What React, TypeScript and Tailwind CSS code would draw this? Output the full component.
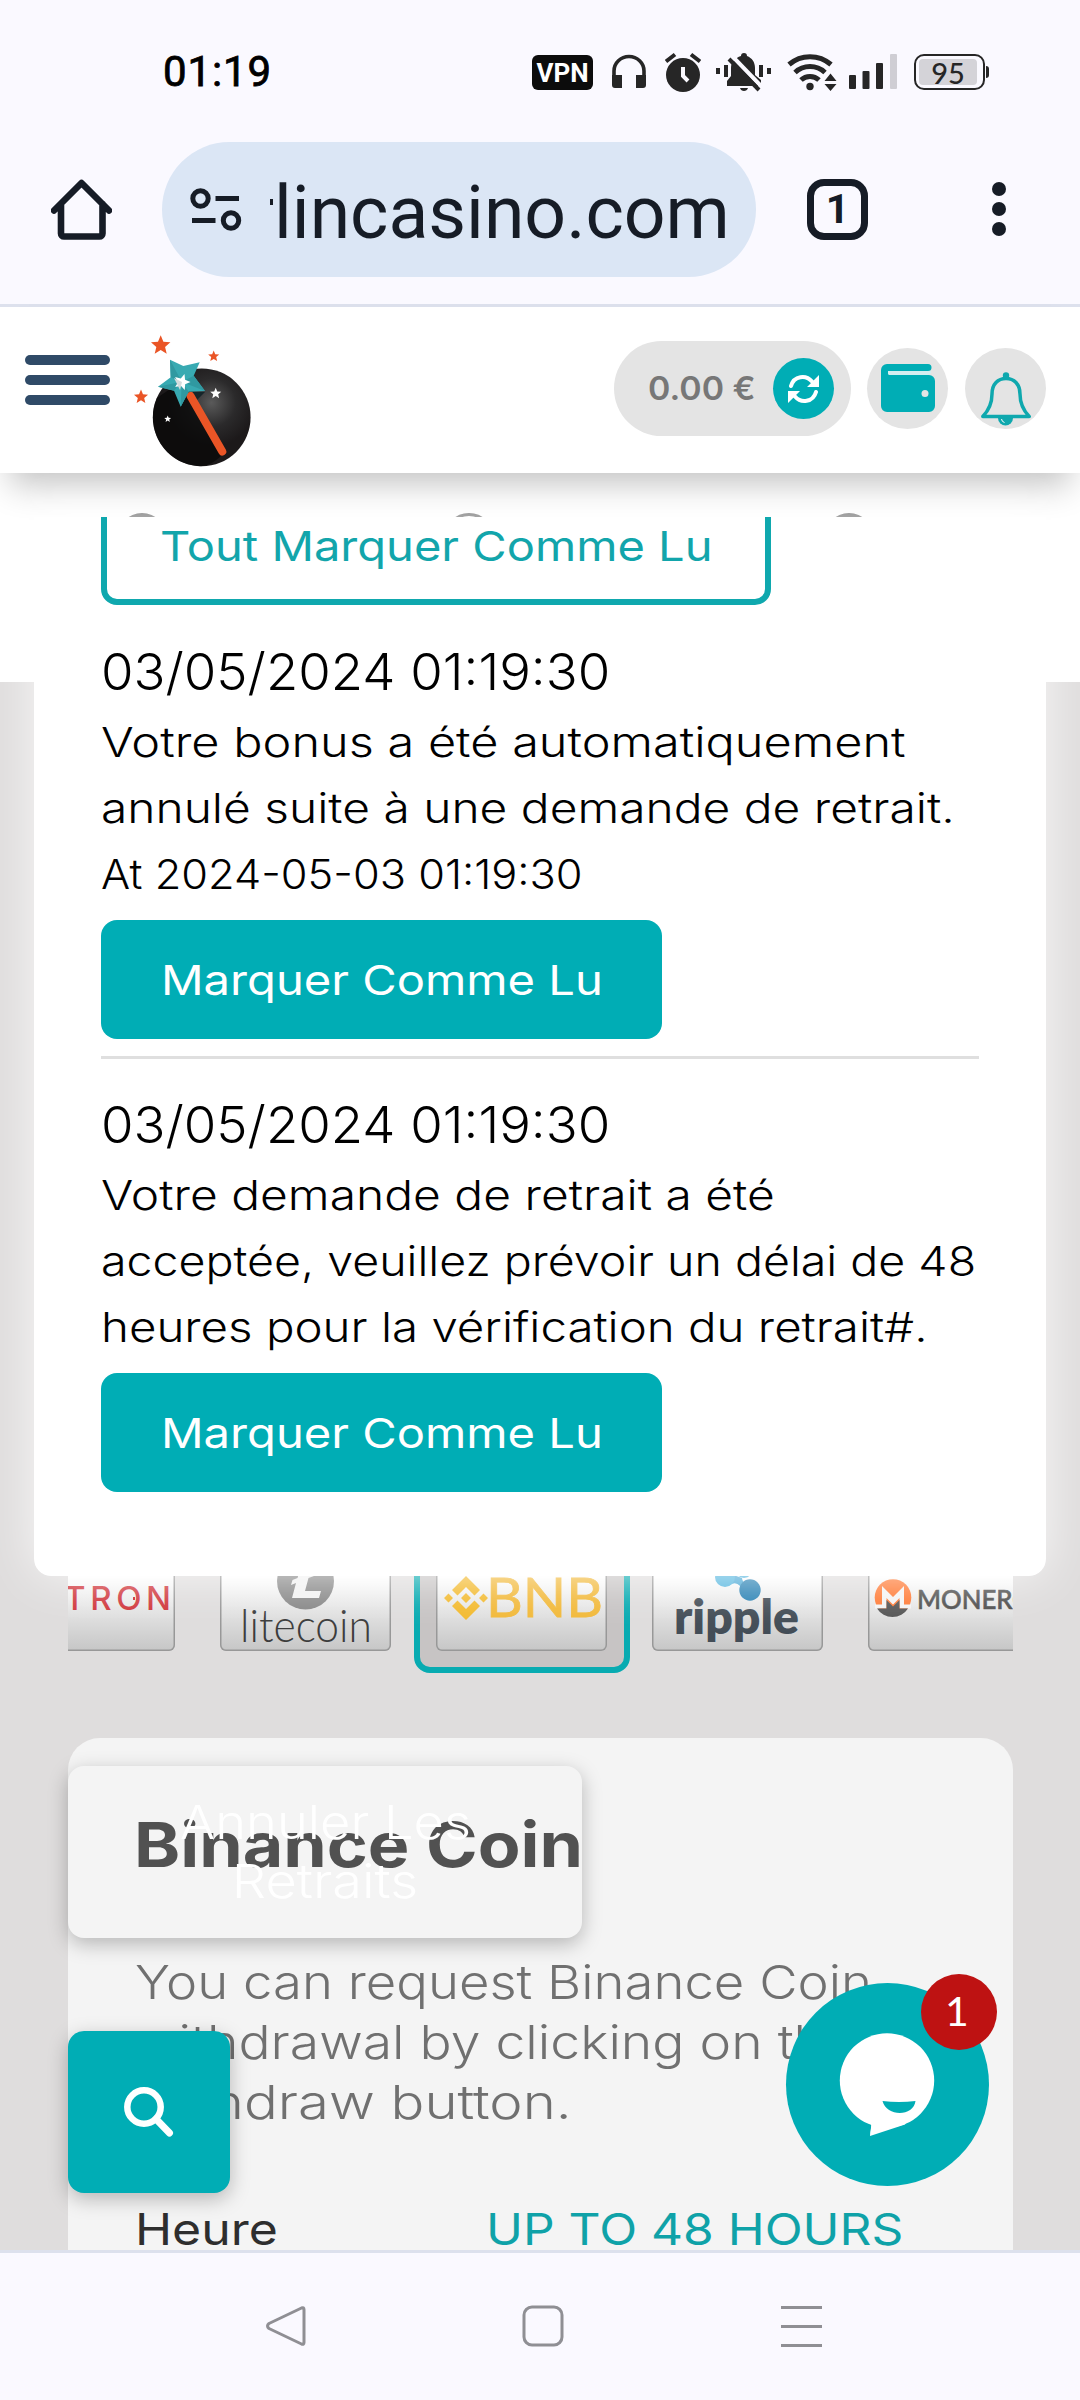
import type { ReactNode } from "react";

function starPath(cx: number, cy: number, r: number, turn = 0) {
  const points: string[] = [];
  for (let i = 0; i < 10; i++) {
    const radius = i % 2 ? r * 0.45 : r;
    const angle = -Math.PI / 2 + (i * Math.PI) / 5 + turn;
    points.push(`${(cx + radius * Math.cos(angle)).toFixed(2)},${(cy + radius * Math.sin(angle)).toFixed(2)}`);
  }
  return `M${points.join("L")}Z`;
}

function StatusBar() {
  return (
    <div className="flex h-[142px] items-start pl-[163px]">
      <span className="mt-[47px] w-[369px] font-[Roboto] text-[42px] leading-[50px] tracking-[0.9px] text-black [-webkit-text-stroke:0.8px_black]">01:19</span>
      <div className="mt-[52px] flex h-10 items-start text-[#262626]">
        <span className="mt-[3px] flex h-[35px] w-[61px] items-center justify-center rounded-[6px] bg-[#0c0c0c] font-[Roboto] text-[26px] leading-none font-bold text-white">
          VPN
        </span>
        <svg className="ml-[19px] h-10 w-[34px]" viewBox="0 0 34 40" fill="none">
          <path d="M2 26V19a15 14.500 0 0 1 30 0v7" stroke="currentColor" strokeWidth="3.600" />
          <path d="M0 23h10v13H3a3 3 0 0 1-3-3zM24 23h10v10a3 3 0 0 1-3 3h-7z" fill="currentColor" />
        </svg>
        <svg className="ml-[19px] h-10 w-9" viewBox="0 0 36 40" fill="none">
          <circle cx="18" cy="23" r="17" fill="currentColor" />
          <path d="M1 9.500 10 2.500M35 9.500 26 2.500" stroke="currentColor" strokeWidth="4" />
          <path d="M18 15v9l5 5" stroke="#faf9ff" strokeWidth="4" />
        </svg>
        <svg className="ml-[15px] h-10 w-[55px]" viewBox="0 0 55 40" fill="none">
          <path d="M25 4a3 3 0 0 1 6 0c5 2 8 6 8 12v7l6 5v6H11v-5l4-5V16c0-6 4-10 10-12z" fill="currentColor" />
          <path d="M24 36h8c-1 4-7 4-8 0zM0 16h4v6H0zM8 13h4v12H8zM43 13h4v12h-4zM51 16h4v6h-4z" fill="currentColor" />
          <path d="M17 5 46 35" stroke="#faf9ff" strokeWidth="4" />
          <path d="M13 7 43 38" stroke="currentColor" strokeWidth="4" />
        </svg>
        <svg className="ml-4 h-10 w-[50px]" viewBox="0 0 50 40" fill="none">
          <path d="M2 12.500a32 32 0 0 1 42 0M8 20.500a22 22 0 0 1 30 0M14 28a13 13 0 0 1 18 0" stroke="currentColor" strokeWidth="5" />
          <circle cx="23" cy="34.500" r="3.700" fill="currentColor" />
          <path d="M43.500 21.500 49.500 29h-12zM43.500 39l-6-7h12z" fill="currentColor" />
        </svg>
        <svg className="ml-3 h-10 w-12" viewBox="0 0 48 40">
          <rect x="0" y="23" width="7" height="14" rx="1" fill="currentColor" />
          <rect x="13.500" y="19" width="7" height="18" rx="1" fill="currentColor" />
          <rect x="27" y="11" width="7" height="26" rx="1" fill="currentColor" />
          <rect x="41" y="2" width="7" height="35" rx="1" fill="#cfced4" />
        </svg>
        <div className="mt-[2px] ml-[17px] flex items-center">
          <div className="h-9 w-[71px] rounded-[10px] border-[2.500px] border-[#262626] p-[3px]">
            <div className="flex h-full w-[58px] items-center justify-center rounded-[4px] bg-[#d4d3d8] font-[Lato] text-[29px] leading-none font-medium">
              95
            </div>
          </div>
          <div className="ml-px h-3 w-[3px] rounded-r-sm bg-[#262626]" />
        </div>
      </div>
    </div>
  );
}

function Toolbar() {
  return (
    <div className="flex h-[162px] items-start text-[#161c26]">
      <svg className="mt-[37px] ml-[51px] h-[61px] w-[61px]" viewBox="0 0 61 61" fill="none" stroke="currentColor" strokeWidth="6.600" strokeLinecap="round" strokeLinejoin="round">
        <path d="M3 31.500 30.500 4 58 31.500M10 25v29.500a3 3 0 0 0 3 3h35.500a3 3 0 0 0 3-3V25" />
      </svg>
      <div className="ml-[50px] flex h-[135px] w-[594px] rounded-full bg-[#dbe6f5]">
        <svg className="mt-[45px] ml-[28px] h-[45px] w-[52px]" viewBox="0 0 52 45" fill="none" stroke="currentColor" strokeWidth="5">
          <circle cx="10.500" cy="11.500" r="7.700" />
          <circle cx="41" cy="33.500" r="7.700" />
          <path d="M25.500 11.500H49M2 33.500h23.500" />
        </svg>
        <div className="ml-7 flex w-[470px] items-start overflow-hidden">
          <span className="mt-[57px] h-[6px] w-[3px] shrink-0 bg-current" />
          <span className="mt-[26px] ml-px inline-block origin-left scale-x-[0.990] font-[Roboto] text-[74px] leading-[90px] whitespace-nowrap">
            lincasino.com
          </span>
        </div>
      </div>
      <div className="mt-[37px] ml-[51px] flex h-[61px] w-[61px] items-center justify-center rounded-[17px] border-[7px] border-current font-[Roboto] text-[41px] leading-none font-bold">
        1
      </div>
      <div className="mt-[40px] ml-[124px] flex flex-col gap-[6px]">
        <span className="h-[14px] w-[14px] rounded-full bg-current" />
        <span className="h-[14px] w-[14px] rounded-full bg-current" />
        <span className="h-[14px] w-[14px] rounded-full bg-current" />
      </div>
    </div>
  );
}

function BrandLogo() {
  return (
    <svg className="mt-[25px] ml-5 h-[140px] w-[125px]" viewBox="0 0 125 140">
      <defs>
        <radialGradient id="ball" cx="0.600" cy="0.350" r="0.450">
          <stop offset="0" stopColor="#5a5a5a" />
          <stop offset="0.550" stopColor="#2b2a2b" />
          <stop offset="1" stopColor="#1c191a" />
        </radialGradient>
      </defs>
      <circle cx="71.700" cy="85.300" r="48.900" fill="url(#ball)" />
      <path d="M60 62 92 123C84 131 77 134 70 134.200A48.900 48.900 0 0 1 27 66L40 57z" fill="#080808" opacity="0.750" />
      <path d="M60 60h15l-8 8z" fill="#16262a" />
      <path d="M60.500 64 92.300 119.500" stroke="#ea5526" strokeWidth="8" strokeLinecap="round" />
      <path d="M40 27.700 53.300 34 69.700 30.300 63.700 43.700 75 59 58.700 59.700 50.700 74.700 44 58.700 28 54.700 40.700 45.300z" fill="#38aab2" />
      <path d="M40 27.700 51.700 49.700 40.700 45.300zM28 54.700 51.700 49.700 44 58.700zM50.700 74.700 51.700 49.700 58.700 59.700zM75 59 51.700 49.700 63.700 43.700z" fill="#3099a1" />
      <path d={starPath(52, 50, 8.5, 0.3)} fill="#fff" />
      <path d="M44 46 52 50 50 58z" fill="#d5dcdd" />
      <path d={starPath(30.7, 13.5, 10.2)} fill="#ea5526" />
      <path d={starPath(83.7, 24.3, 5.8)} fill="#ea5526" />
      <path d={starPath(11, 65, 7.4)} fill="#ea5526" />
      <path d={starPath(85.7, 61.5, 5.8)} fill="#fff" />
      <path d={starPath(37.7, 87, 3.6)} fill="#fff" />
    </svg>
  );
}

function SiteHeader() {
  return (
    <header className="relative z-10 flex h-[166px] items-start bg-white shadow-[0_22px_32px_-10px_rgba(0,0,0,0.240)]">
      <div className="mt-12 ml-[25px] flex w-[85px] flex-col gap-[10px]">
        <span className="h-[10px] rounded-full bg-[#2f4a67]" />
        <span className="h-[10px] rounded-full bg-[#2f4a67]" />
        <span className="h-[10px] rounded-full bg-[#2f4a67]" />
      </div>
      <BrandLogo />
      <div className="mt-[34px] ml-[359px] flex h-[95px] w-[237px] items-center justify-between rounded-full bg-[#e4e4e4] pr-[17px] pl-[34px]">
        <span className="inline-block origin-left scale-x-[1.060] font-[Inter] text-[32px] font-semibold text-[#777]">0.00 €</span>
        <span className="flex h-[61px] w-[61px] items-center justify-center rounded-full bg-[#00adb5]">
          <svg className="h-[30px] w-[31px]" viewBox="0 0 31 30" fill="none">
            <path d="M3 12C6 1.500 18 .5 24 7.500M28 18C25 28.500 13 29.500 7 22.500" stroke="#fff" strokeWidth="4" strokeLinecap="round" />
            <path d="M31 1v12H19zM0 29V17h12z" fill="#fff" />
          </svg>
        </span>
      </div>
      <div className="mt-[41px] ml-4 flex h-[81px] w-[81px] rounded-full bg-[#e4e4e4]">
        <svg className="mt-4 ml-[14px] h-12 w-[54px]" viewBox="0 0 54 48">
          <path d="M6 0h41a3.500 3.500 0 0 1 0 7H9a2 2 0 0 0 0 4h39a6 6 0 0 1 6 6v25a6 6 0 0 1-6 6H6a6 6 0 0 1-6-6V6a6 6 0 0 1 6-6z" fill="#00adb5" />
          <path d="M7 7h43v2q-1 2-4 2H9a2 2 0 0 1-2-2z" fill="#d3eef0" />
          <circle cx="44" cy="29.500" r="3.500" fill="#e4e4e4" />
        </svg>
      </div>
      <div className="mt-[41px] ml-[17px] flex h-[81px] w-[81px] rounded-full bg-[#e4e4e4]">
        <svg className="mt-6 ml-4 h-[54px] w-[50px]" viewBox="0 0 50 54">
          <path d="M17 46h15a7.500 7.500 0 0 1-15 0z" fill="#0fa8ae" />
          <path d="M20.500 47a4 4 0 0 0 3 3.500" stroke="#fff" strokeWidth="1" fill="none" />
          <path d="M1.800 44.500C8 38 11 32 11 22 11 12 17 6.500 25 6.500s14 5.500 14 15.500c0 10 3 16 9.200 22.500z" fill="none" stroke="#0fa8ae" strokeWidth="3.500" strokeLinejoin="round" />
          <circle cx="25" cy="3.500" r="3.200" fill="#0fa8ae" />
        </svg>
      </div>
    </header>
  );
}

function MarkReadButton() {
  return (
    <button className="flex h-[119px] w-[561px] items-center rounded-[16px] bg-[#00adb5] pt-[2px] pl-[60px]">
      <span className="inline-block origin-left scale-x-[1.150] text-[41px] font-normal whitespace-nowrap text-white">Marquer Comme Lu</span>
    </button>
  );
}

function Notification({ children }: { children: ReactNode }) {
  return (
    <article>
      <h3 className="h-[66px] text-[51px] leading-[66px] font-light whitespace-nowrap">
        <span className="inline-block origin-left scale-x-[1.033]">03/05/2024 01:19:30</span>
      </h3>
      <p className="mt-1 mb-[13px] flex flex-col items-start text-[41px] leading-[66px] font-light whitespace-nowrap">{children}</p>
      <MarkReadButton />
    </article>
  );
}

function NotificationPanel() {
  return (
    <section className="absolute top-[44px] left-[34px] z-20 h-[1059px] w-[1012px] overflow-hidden rounded-b-[17px] bg-white px-[67px] font-[Inter] text-black">
      <button className="-mt-[31px] flex h-[119px] w-[670px] items-center rounded-[16px] border-[6px] border-[#0fa8ae] pt-[2px] pl-[53px]">
        <span className="inline-block origin-left scale-x-[1.148] text-[41px] font-normal whitespace-nowrap text-[#12a5ab]">Tout Marquer Comme Lu</span>
      </button>
      <div className="pt-[34px]">
        <Notification>
          <span className="origin-left scale-x-[1.187]">Votre bonus a été automatiquement</span>
          <span className="origin-left scale-x-[1.168]">annulé suite à une demande de retrait.</span>
          <span className="origin-left scale-x-[1.057]">At 2024-05-03 01:19:30</span>
        </Notification>
      </div>
      <hr className="mt-[17px] mb-[33px] w-[878px] border-t-[3px] border-[#dfdfdf]" />
      <Notification>
        <span className="origin-left scale-x-[1.169]">Votre demande de retrait a été</span>
        <span className="origin-left scale-x-[1.135]">acceptée, veuillez prévoir un délai de 48</span>
        <span className="origin-left scale-x-[1.157]">heures pour la vérification du retrait#.</span>
      </Notification>
    </section>
  );
}

function Coin({ active = false, children }: { active?: boolean; children: ReactNode }) {
  return (
    <div className={active ? "h-[183px] w-[216px] shrink-0 rounded-[16px] border-[6px] border-[#08abb1] bg-[#c7c4c4] p-4" : "h-[183px] w-[216px] shrink-0 p-[22px]"}>
      <div className="h-[139px] w-[171px] overflow-hidden rounded-[6px] bg-linear-to-b from-white from-45% to-[#c6c6c6] shadow-[inset_0_0_0_1.500px_#989898]">
        <svg className="h-[139px] w-[171px]" viewBox="0 0 171 139">
          {children}
        </svg>
      </div>
    </div>
  );
}

function CoinCarousel() {
  return (
    <div className="mr-[67px] ml-[68px] mt-[808px] overflow-hidden">
      <div className="-ml-[86px] flex">
        <Coin>
          <text x="60" y="98" fontFamily="Inter" fontWeight="500" fontSize="33" textLength="107" fill="#d0353b">TRON</text>
          <path d="M129 86.500h2" stroke="#cf2229" strokeWidth="3" />
        </Coin>
        <Coin>
          <circle cx="85.500" cy="69" r="28.500" fill="#888" />
          <path d="M84 46h10l-4 15 5-2-1 5-5.500 2-3.500 13h16l-2 7H72l4-15-5 2 1.500-5 5-2z" fill="#f2f2f2" />
          <text x="20" y="129.500" fontFamily="Lato" fontWeight="300" fontSize="45" textLength="132" lengthAdjust="spacingAndGlyphs" fill="#3c3c3c">litecoin</text>
        </Coin>
        <Coin active>
          <path d="M30 64 44 78l-5.500 5.500L30 75l-8.500 8.500L16 78zM30 108 16 94l5.500-5.500L30 97l8.500-8.500L44 94zM30 81l5 5-5 5-5-5zM12.500 81.500 17 86l-4.500 4.500L8 86zM47.500 81.500 52 86l-4.500 4.500L43 86z" fill="#f3ba2f" />
          <text x="50" y="105" fontFamily="Lato" fontWeight="400" fontSize="54" textLength="117" lengthAdjust="spacingAndGlyphs" fill="#f2b93a" stroke="#f2b93a" strokeWidth="0.800">BNB</text>
        </Coin>
        <Coin>
          <path d="M73 60 90 66Q90 71 97 73L92 82Q87 66 76 74z" fill="#4ba9d6" />
          <circle cx="73" cy="65" r="10" fill="#55b6df" />
          <circle cx="92" cy="57" r="9" fill="#55b6df" />
          <circle cx="98" cy="78" r="10.700" fill="#2c83b5" />
          <text x="22" y="122" fontFamily="Lato" fontWeight="800" fontSize="47" textLength="125" lengthAdjust="spacingAndGlyphs" fill="#434d57">ripple</text>
        </Coin>
        <Coin>
          <circle cx="25" cy="85.500" r="18.300" fill="#ff7a35" />
          <path d="M7 92.500h7V74l11 11 11-11v18.500h7v4H31.500V86L25 92.500 18.500 86v10.500H7z" fill="#f4f4f4" />
          <path d="M9 96.500h9.500V88L25 94.500 31.500 88v8.500H40a18.300 18.300 0 0 1-31 0z" fill="#555" />
          <text x="49" y="97" fontFamily="Lato" fontWeight="500" fontSize="26" textLength="116" lengthAdjust="spacingAndGlyphs" fill="#4e4e4e" stroke="#4e4e4e" strokeWidth="0.600">MONERO</text>
        </Coin>
      </div>
    </div>
  );
}

function WithdrawalCard() {
  return (
    <section className="mr-[67px] ml-[68px] mt-[65px] h-[512px] rounded-t-[32px] bg-[#f4f4f4] px-[68px] font-[Inter] whitespace-nowrap">
      <h2 className="-ml-[2px] h-[207px] pt-[67px] text-[62px] leading-[80px] font-bold text-[#515151]">
        <span className="inline-block origin-left scale-x-[1.127]">Binance Coin</span>
      </h2>
      <p className="-ml-px flex flex-col items-start pt-[7px] text-[47px] leading-[60px] font-light text-[#707070]">
        <span className="origin-left scale-x-[1.120]">You can request Binance Coin</span>
        <span className="origin-left scale-x-[1.137]">withdrawal by clicking on the</span>
        <span className="origin-left scale-x-[1.197]">withdraw button.</span>
      </p>
      <div className="-ml-px grid grid-cols-[351px_1fr] pt-[67px] text-[44px] leading-[60px] font-normal">
        <span className="origin-left scale-x-[1.135] text-[#2e2e2e]">Heure</span>
        <span className="w-fit origin-left scale-x-[1.128] text-[#0fa2a8]">UP TO 48 HOURS</span>
      </div>
    </section>
  );
}

function FloatingActions() {
  return (
    <>
      <button className="absolute top-[1293px] left-[68px] flex h-[172px] w-[514px] flex-col items-center rounded-[16px] pt-[19px] font-[Inter] text-[47px] leading-[58.500px] font-light text-white shadow-[0_6px_20px_rgba(0,0,0,0.260)]">
        <span className="mt-[8px] scale-x-[1.115]">Annuler Les</span>
        <span className="scale-x-[1.150]">Retraits</span>
      </button>
      <button className="absolute top-[1558px] left-[68px] flex h-[162px] w-[162px] items-center justify-center rounded-[16px] bg-[#00adb5] shadow-[0_6px_20px_rgba(0,0,0,0.260)]">
        <svg className="h-[50px] w-[50px]" viewBox="0 0 50 50" fill="none" stroke="#fff" strokeLinecap="round">
          <circle cx="20" cy="20" r="16.700" strokeWidth="6.500" />
          <path d="M32 32 45.500 46" strokeWidth="7" />
        </svg>
      </button>
      <div className="absolute top-[1510px] left-[786px] flex h-[203px] w-[203px] rounded-full bg-[#00adb5]">
        <svg className="mt-[50px] ml-[53px] h-[104px] w-[96px]" viewBox="0 0 96 104">
          <circle cx="48" cy="47.500" r="47.200" fill="#fff" />
          <path d="M31 90q2 2 1 5-1 4-1 8L66 91.500 72 80z" fill="#fff" />
          <path d="M43.500 68q16.500 2 33 0c-2 16-29 16-33 0z" fill="#00adb5" />
        </svg>
        <span className="absolute -top-[9px] left-[135px] flex h-[76px] w-[76px] items-center justify-center rounded-full bg-[#be1212] pr-1 pb-1 font-[Lato] text-[41px] leading-none text-white">
          1
        </span>
      </div>
    </>
  );
}

function NavigationBar() {
  return (
    <nav className="flex h-[150px] items-start border-t-[3px] border-[#dde1ed] bg-[#faf9ff] pt-[52px] text-[#8f8f94]">
      <svg className="ml-[265px] h-[42px] w-[41px]" viewBox="0 0 41 42" fill="none" stroke="currentColor" strokeWidth="3">
        <path d="M36.500 3 4 18.500q-3 2.500 0 5L36.500 39q2.500 1 2.500-1.500V4.500q0-2.500-2.500-1.500z" strokeLinejoin="round" />
      </svg>
      <svg className="ml-[216px] h-[42px] w-[42px]" viewBox="0 0 42 42" fill="none" stroke="currentColor" strokeWidth="3">
        <rect x="2" y="2" width="38" height="38" rx="8" />
      </svg>
      <div className="mt-px ml-[217px] flex w-[41px] flex-col gap-[16px]">
        <span className="h-[3px] bg-current" />
        <span className="h-[3px] bg-current" />
        <span className="h-[3px] bg-current" />
      </div>
    </nav>
  );
}

export default function App() {
  return (
    <div className="flex h-[2400px] w-[1080px] flex-col overflow-hidden bg-[#faf9ff]">
      <div className="h-[307px] shrink-0 border-b-[3px] border-[#dde1ed]">
        <StatusBar />
        <Toolbar />
      </div>
      <SiteHeader />
      <main className="relative h-[1777px] overflow-hidden bg-[#dfdddd]">
        <div className="flex h-[209px] bg-white pt-10">
          <span className="ml-[117px] h-[50px] w-[50px] rounded-full bg-[#6a6a6a]" />
          <span className="ml-[277px] h-[50px] w-[50px] rounded-full border-[3px] border-[#6a6a6a]" />
          <span className="ml-[330px] h-[50px] w-[50px] rounded-full bg-[#6a6a6a]" />
        </div>
        <CoinCarousel />
        <WithdrawalCard />
        <div className="absolute top-[44px] left-[34px] z-10 h-[1059px] w-[1012px] rounded-b-[17px] shadow-[0_0_50px_rgba(255,255,255,0.800)]" />
        <NotificationPanel />
        <FloatingActions />
      </main>
      <NavigationBar />
    </div>
  );
}
